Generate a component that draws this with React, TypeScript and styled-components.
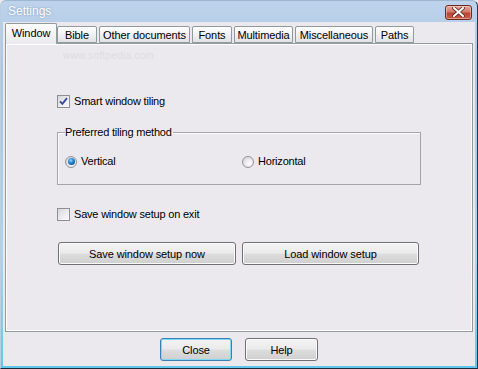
import React from 'react';
import styled, { createGlobalStyle } from 'styled-components';

const GlobalStyle = createGlobalStyle`
  html, body {
    margin: 0;
    padding: 0;
    width: 478px;
    height: 369px;
    overflow: hidden;
    background: #ebe9ed;
  }
  * { box-sizing: border-box; }
`;

const FONT = `"Liberation Sans", Arial, sans-serif`;

const StyledWindow = styled.div`
  width: 478px;
  height: 369px;
  display: flex;
  flex-direction: column;
  padding: 0 2px 2px 2px;
  background: linear-gradient(180deg, #bed3eb 0%, #abc5e3 20%, #a9d6ee 70%, #62c6ec 100%);
  border-top: 1px solid #9db6d2;
  border-left: 1px solid #b9cde3;
  border-right: 1px solid #24384c;
  border-bottom: 1px solid #1c2c3a;
  border-radius: 6px 6px 0 0;
  font-family: ${FONT};
`;

const StyledTitleBar = styled.div`
  height: 21px;
  display: flex;
  align-items: center;
  justify-content: space-between;
  padding: 0 3px 1px 5px;
`;

const StyledTitle = styled.span`
  font-size: 12px;
  color: #ffffff;
  text-shadow: 0 0 2px rgba(70, 100, 140, 0.6);
`;

const StyledCloseBox = styled.div`
  width: 27px;
  height: 15px;
  display: flex;
  align-items: center;
  justify-content: center;
  border: 1px solid #6e2a22;
  border-radius: 3px;
  background: linear-gradient(180deg, #e6a89c 0%, #d27b6b 45%, #bb4333 55%, #c9604c 100%);
  box-shadow: inset 0 0 0 1px rgba(255, 220, 210, 0.45);
  margin-top: 2px;
`;

const StyledClient = styled.div`
  flex: 1;
  display: flex;
  flex-direction: column;
  background: #ebe9ed;
  padding: 1px 2px 0 2px;
`;

const StyledTabStrip = styled.div`
  display: flex;
  align-items: flex-end;
  height: 20px;
`;

const StyledTab = styled.div<{ $w: number; $active?: boolean }>`
  width: ${(p) => p.$w}px;
  height: ${(p) => (p.$active ? 21 : 17)}px;
  margin-right: ${(p) => (p.$active ? 0 : 2)}px;
  margin-bottom: ${(p) => (p.$active ? -1 : 0)}px;
  position: relative;
  z-index: ${(p) => (p.$active ? 2 : 1)};
  display: flex;
  align-items: center;
  justify-content: center;
  padding-bottom: ${(p) => (p.$active ? 3 : 0)}px;
  font-size: 11px;
  letter-spacing: -0.1px;
  color: #000;
  border: 1px solid #919b9c;
  border-bottom: ${(p) => (p.$active ? 'none' : '1px solid #919b9c')};
  border-radius: 2px 2px 0 0;
  background: ${(p) =>
    p.$active
      ? 'linear-gradient(180deg, #ffffff 0%, #f6f5f7 40%, #ebe9ed 100%)'
      : 'linear-gradient(180deg, #ffffff 0%, #f4f4f6 40%, #e2e2e6 100%)'};
`;

const StyledPanel = styled.div`
  height: 289px;
  border: 1px solid #919b9c;
  box-shadow: inset 1px 1px 0 #ffffff, inset -1px -1px 0 #ffffff;
  display: flex;
  flex-direction: column;
  align-items: flex-start;
  padding: 6px 0 0 51px;
`;

const StyledWatermark = styled.div`
  font-size: 10px;
  line-height: 11px;
  color: #dedce0;
  margin-left: 6px;
  letter-spacing: 0.3px;
`;

const StyledRow = styled.label<{ $mt: number }>`
  display: flex;
  align-items: center;
  gap: 4px;
  margin-top: ${(p) => p.$mt}px;
  font-size: 11px;
  line-height: 13px;
  letter-spacing: -0.2px;
  color: #000;
`;

const StyledCheckBox = styled.span`
  width: 13px;
  height: 13px;
  display: flex;
  align-items: center;
  justify-content: center;
  border: 1px solid #8f8f93;
  background: linear-gradient(135deg, #d6d5d9 0%, #ebebee 50%, #fbfbfc 100%);
`;

const StyledRadio = styled.span`
  width: 12px;
  height: 12px;
  border-radius: 50%;
  display: flex;
  align-items: center;
  justify-content: center;
  border: 1px solid #929196;
  background: radial-gradient(circle at 65% 65%, #ffffff 0%, #e7e6ea 50%, #cfced3 100%);
`;

const StyledRadioDot = styled.span`
  width: 7px;
  height: 7px;
  border-radius: 50%;
  background: radial-gradient(circle at 40% 35%, #8fd7ff 0%, #1f7fd0 45%, #0b3670 100%);
`;

const StyledGroup = styled.fieldset`
  margin: 18px 0 0 0;
  width: 364px;
  min-width: 0;
  padding: 0 0 16px 7px;
  border: 1px solid #a5a4a9;
  box-shadow: inset 1px 1px 0 #fbfbfb;
`;

const StyledLegend = styled.legend`
  padding: 0 1px 0 0;
  font-size: 11px;
  line-height: 13px;
  letter-spacing: -0.2px;
  color: #000;
`;

const StyledRadioRow = styled.div`
  display: grid;
  grid-template-columns: 177px auto;
  margin-top: 16px;
`;

const StyledButtonRow = styled.div<{ $mt?: number; $center?: boolean; $gap: number }>`
  display: flex;
  gap: ${(p) => p.$gap}px;
  justify-content: ${(p) => (p.$center ? 'center' : 'flex-start')};
  margin-top: ${(p) => p.$mt ?? 0}px;
  margin-left: ${(p) => (p.$center ? 0 : 1)}px;
  padding-top: ${(p) => (p.$center ? 6 : 0)}px;
`;

const StyledButton = styled.button<{ $w: number; $default?: boolean }>`
  width: ${(p) => p.$w}px;
  height: 23px;
  padding: 0;
  font-family: ${FONT};
  font-size: 11px;
  letter-spacing: -0.1px;
  color: #000;
  border: 1px solid ${(p) => (p.$default ? '#3c7fb1' : '#707070')};
  border-radius: 3px;
  background: linear-gradient(180deg, #f3f3f3 0%, #ebebeb 48%, #dddddd 52%, #cfcfcf 100%);
  box-shadow: inset 0 0 0 1px ${(p) => (p.$default ? '#7fd9f6' : '#fbfbfb')};
`;

function Check() {
  return (
    <svg width="9" height="9" viewBox="0 0 9 9">
      <path d="M1 4.3 L3.4 6.8 L8 1.2" fill="none" stroke="#3b4d92" strokeWidth="1.9" />
    </svg>
  );
}

function CloseGlyph() {
  return (
    <svg width="13" height="10" viewBox="0 0 13 10">
      <path d="M2 1 L11 9 M11 1 L2 9" stroke="#5a2a25" strokeWidth="3.6" strokeLinecap="square" />
      <path d="M2 1 L11 9 M11 1 L2 9" stroke="#ffffff" strokeWidth="2" strokeLinecap="square" />
    </svg>
  );
}

const tabs: { label: string; w: number; active?: boolean }[] = [
  { label: 'Window', w: 52, active: true },
  { label: 'Bible', w: 40 },
  { label: 'Other documents', w: 91 },
  { label: 'Fonts', w: 40 },
  { label: 'Multimedia', w: 59 },
  { label: 'Miscellaneous', w: 78 },
  { label: 'Paths', w: 39 },
];

export default function App() {
  return (
    <StyledWindow>
      <GlobalStyle />
      <StyledTitleBar>
        <StyledTitle>Settings</StyledTitle>
        <StyledCloseBox>
          <CloseGlyph />
        </StyledCloseBox>
      </StyledTitleBar>
      <StyledClient>
        <StyledTabStrip>
          {tabs.map((t) => (
            <StyledTab key={t.label} $w={t.w} $active={t.active}>
              {t.label}
            </StyledTab>
          ))}
        </StyledTabStrip>
        <StyledPanel>
          <StyledWatermark>www.softpedia.com</StyledWatermark>
          <StyledRow $mt={34}>
            <StyledCheckBox>
              <Check />
            </StyledCheckBox>
            Smart window tiling
          </StyledRow>
          <StyledGroup>
            <StyledLegend>Preferred tiling method</StyledLegend>
            <StyledRadioRow>
              <StyledRow $mt={0}>
                <StyledRadio>
                  <StyledRadioDot />
                </StyledRadio>
                Vertical
              </StyledRow>
              <StyledRow $mt={0}>
                <StyledRadio />
                Horizontal
              </StyledRow>
            </StyledRadioRow>
          </StyledGroup>
          <StyledRow $mt={23}>
            <StyledCheckBox />
            Save window setup on exit
          </StyledRow>
          <StyledButtonRow $mt={21} $gap={6}>
            <StyledButton $w={178}>Save window setup now</StyledButton>
            <StyledButton $w={177}>Load window setup</StyledButton>
          </StyledButtonRow>
        </StyledPanel>
        <StyledButtonRow $center $gap={13}>
          <StyledButton $w={72} $default>
            Close
          </StyledButton>
          <StyledButton $w={73}>Help</StyledButton>
        </StyledButtonRow>
      </StyledClient>
    </StyledWindow>
  );
}
